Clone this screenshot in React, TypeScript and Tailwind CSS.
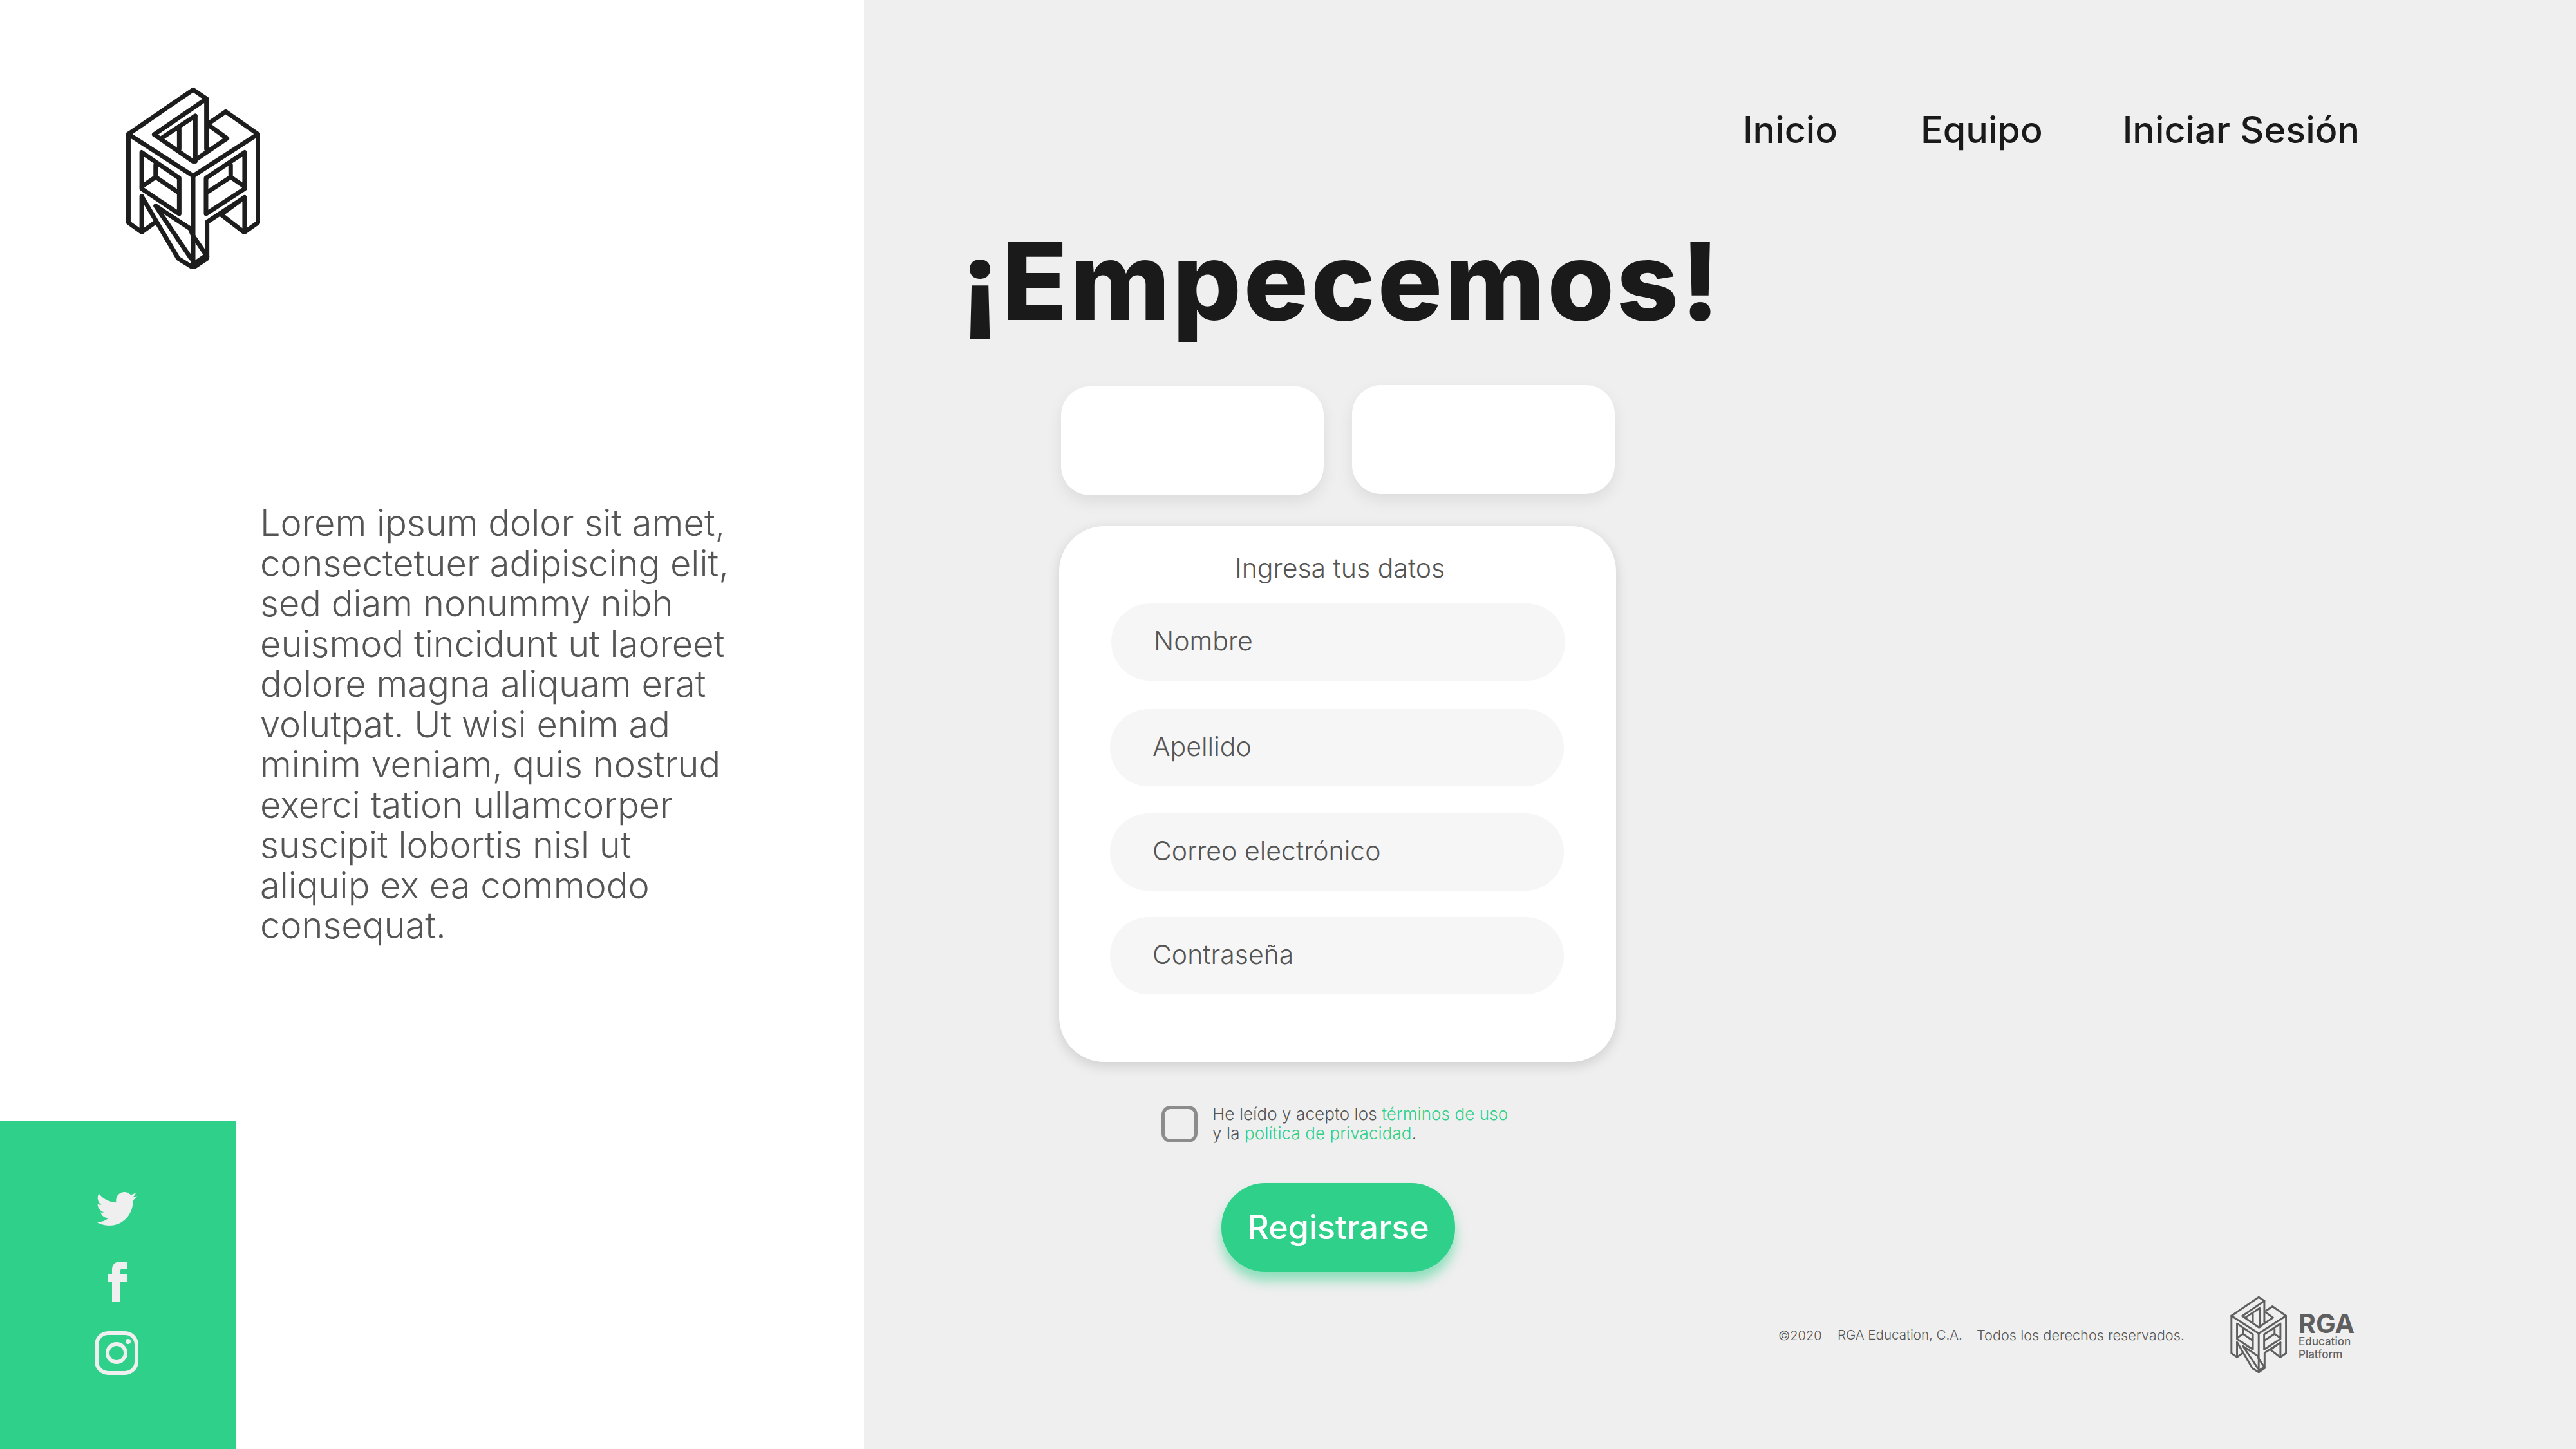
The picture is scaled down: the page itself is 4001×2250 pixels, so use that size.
import { FaTwitter } from 'react-icons/fa'

const lines = [
  'Lorem ipsum dolor sit amet,',
  'consectetuer adipiscing elit,',
  'sed diam nonummy nibh',
  'euismod tincidunt ut laoreet',
  'dolore magna aliquam erat',
  'volutpat. Ut wisi enim ad',
  'minim veniam, quis nostrud',
  'exerci tation ullamcorper',
  'suscipit lobortis nisl ut',
  'aliquip ex ea commodo',
  'consequat.',
]

const fields = [
  { label: 'Nombre', cls: 'ml-[81px] mt-[31px]' },
  { label: 'Apellido', cls: 'ml-[79px] mt-[44px]' },
  { label: 'Correo electrónico', cls: 'ml-[79px] mt-[42px]' },
  { label: 'Contraseña', cls: 'ml-[79px] mt-[41px]' },
]

function Logo({ className }: { className: string }) {
  return (
    <svg viewBox="165 105 627 850" className={className} fill="none" stroke="currentColor" strokeWidth="21" strokeLinejoin="round" strokeLinecap="round">
      <path d="M178 325 480 118 542 160V395" />
      <path d="M542 160 298 327 480 452 638 345 558 287" />
      <path d="M178 325 480 520 782 325 632 220 560 270" />
      <path d="M178 325V738L240 782 305 735" />
      <path d="M240 615V782M240 615 410 905 480 948 545 905V735L720 620V782L782 738V325" />
      <path d="M720 620 610 700 717 782" />
      <path d="M480 520V948" />
      <path d="M240 410V580L415 697V530ZM240 570 305 525 415 600M305 525V470" />
      <path d="M720 410V580L540 697V530ZM720 570 655 525 540 600M655 525V470" />
      <path d="M305 660 465 765 480 800 545 895M305 660 470 905M480 932 535 895" />
      <path d="M490 240V452M415 300V395M490 240 335 342" />
    </svg>
  )
}

export default function App() {
  return (
    <div className="flex h-[2250px] w-[4001px] overflow-hidden bg-[#efefef] font-['Inter','Liberation_Sans',sans-serif] text-[#1a1a1a]">
      <aside className="flex w-[1342px] shrink-0 flex-col bg-white">
        <Logo className="ml-[195px] mt-[135px] h-[283px] w-[209px] text-[#1d1d1d]" />
        <p className="ml-[404px] mt-[363px] text-[56px] font-light leading-[62.5px] text-[#555] whitespace-nowrap">
          {lines.map((line) => (
            <span key={line} className="block">{line}</span>
          ))}
        </p>
        <div className="mt-auto flex h-[509px] w-[366px] flex-col items-center bg-[#2ed08a] pr-[4px] pt-[104px] text-[#efefef]">
          <FaTwitter className="h-[64px] w-[64px]" />
          <svg viewBox="0 0 30 63" className="ml-[4px] mt-[50px] h-[63px] w-[30px]" fill="currentColor">
            <path d="M6 63V32H0V20H6V12C6 4 12 0 18 0H30V11H22C20 11 19 12 19 14V20H30L29 32H19V63Z" />
          </svg>
          <svg viewBox="0 0 68 68" className="mt-[45px] h-[68px] w-[68px]" fill="none" stroke="currentColor" strokeWidth="6">
            <rect x="3" y="3" width="62" height="62" rx="18" />
            <circle cx="34" cy="34" r="14" />
            <circle cx="52" cy="16" r="4" fill="currentColor" stroke="none" />
          </svg>
        </div>
      </aside>

      <main className="flex min-w-0 flex-1 flex-col">
        <nav className="mt-[172px] flex h-[60px] items-center justify-end pr-[336px] text-[57.5px] font-medium leading-none">
          <a>Inicio</a>
          <a className="ml-[129px]">Equipo</a>
          <a className="ml-[124px]">Iniciar Sesión</a>
        </nav>
        <h1 className="ml-[150px] mt-[116px] h-[176px] text-[168px] font-extrabold leading-[176px] tracking-[3.5px] whitespace-nowrap">¡Empecemos!</h1>

        <section className="ml-[303px] mt-[74px] w-[865px]">
          <div className="flex items-start">
            <div className="ml-[3px] mt-[2px] h-[169px] w-[408px] rounded-[45px] bg-white shadow-[0_10px_24px_rgba(0,0,0,0.08)]" />
            <div className="ml-[44px] h-[169px] w-[408px] rounded-[45px] bg-white shadow-[0_10px_24px_rgba(0,0,0,0.08)]" />
          </div>

          <form className="mt-[48px] flex h-[832px] flex-col rounded-[70px] bg-white pt-[41px] shadow-[0_6px_20px_rgba(0,0,0,0.14)]">
            <p className="ml-[273px] h-[48px] text-[41px] font-light leading-[48px] text-[#555] whitespace-nowrap">Ingresa tus datos</p>
            {fields.map((field) => (
              <div key={field.label} className={`flex h-[120px] w-[705px] items-center rounded-full bg-[#f6f6f6] pb-[3px] pl-[66px] text-[41px] font-light text-[#555] ${field.cls}`}>
                {field.label}
              </div>
            ))}
          </form>

          <div className="ml-[159px] mt-[68px] flex items-start">
            <span className="h-[57px] w-[56px] rounded-[14px] border-[5px] border-[#8c8c8c]" />
            <p className="-mt-[2px] ml-[23px] text-[26px] font-light leading-[30px] tracking-[0.1px] text-[#555] whitespace-nowrap">
              He leído y acepto los <span className="text-[#2ed08a]">términos de uso</span>
              <br />
              y la <span className="text-[#2ed08a]">política de privacidad</span>.
            </p>
          </div>

          <button type="button" className="ml-[252px] mt-[62px] flex h-[138px] w-[363px] items-center justify-center rounded-[68px] bg-[#2ed08a] text-[52px] font-medium text-white shadow-[0_14px_18px_rgba(46,208,138,0.5)]">
            Registrarse
          </button>
        </section>

        <footer className="ml-[1420px] mt-[37px] flex items-center">
          <p className="mt-[3px] w-[92px] text-[20px] font-light text-[#555] whitespace-nowrap">©2020</p>
          <p className="mt-[3px] w-[216px] text-[20.5px] font-light text-[#555] whitespace-nowrap">RGA Education, C.A.</p>
          <p className="mt-[3px] w-[394px] text-[21.7px] font-light text-[#555] whitespace-nowrap">Todos los derechos reservados.</p>
          <Logo className="h-[120px] w-[88px] text-[#5f5f5f]" />
          <div className="ml-[18px] mt-[6px] flex flex-col text-[#5f5f5f]">
            <span className="text-[41px] font-bold leading-[36px]">RGA</span>
            <span className="text-[17px] font-medium leading-[20px]">Education</span>
            <span className="text-[17px] font-medium leading-[20px]">Platform</span>
          </div>
        </footer>
      </main>
    </div>
  )
}
